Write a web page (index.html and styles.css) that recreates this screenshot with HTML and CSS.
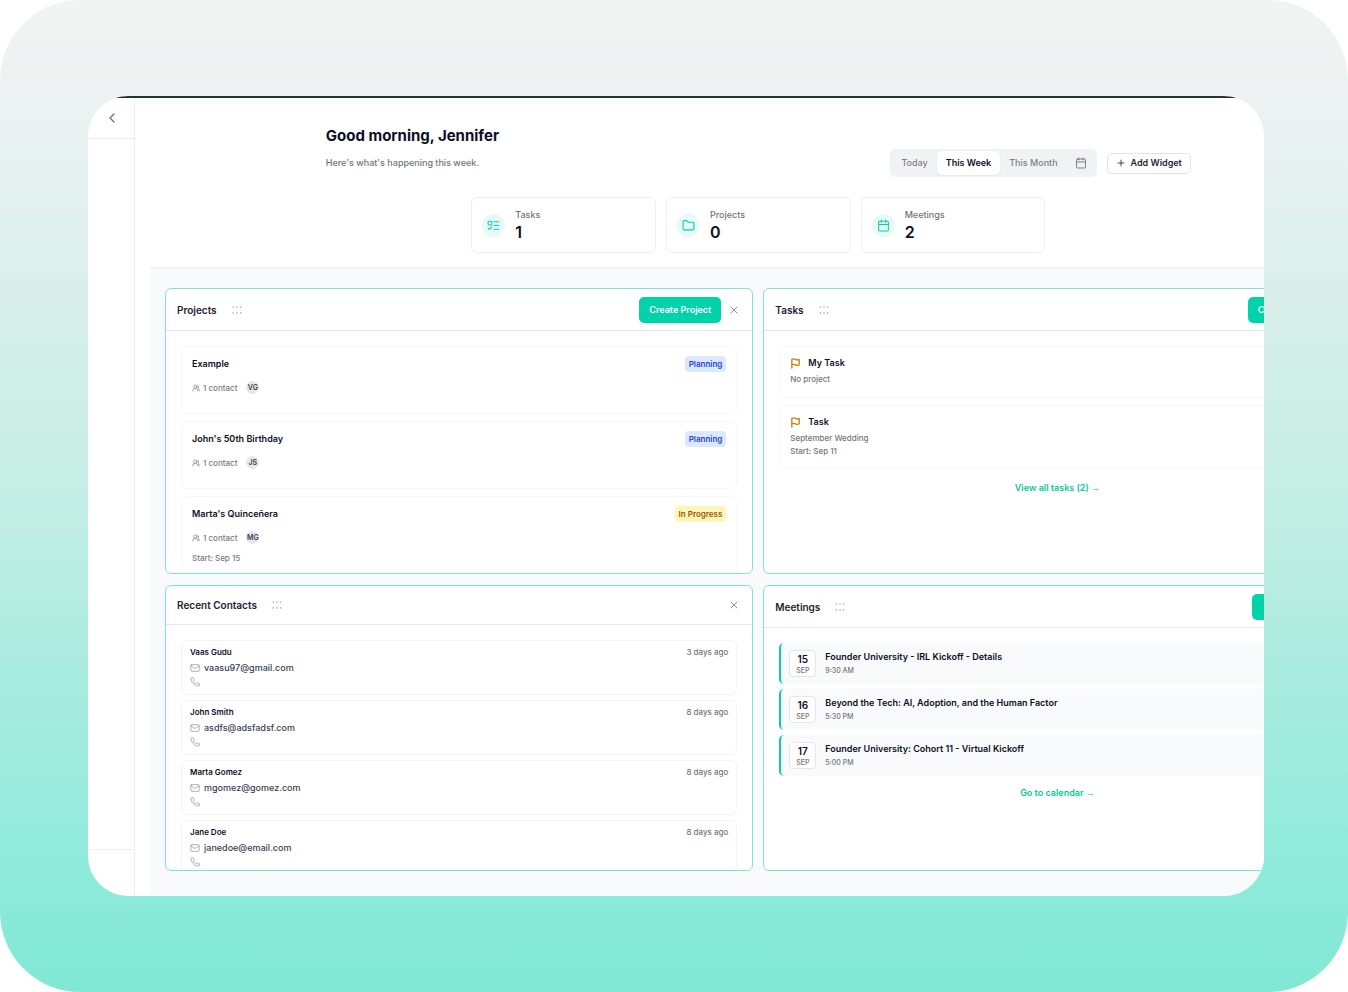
FILE: index.html
```html
<!DOCTYPE html>
<html lang="en">
<head>
<meta charset="utf-8">
<title>Dashboard</title>
<link rel="stylesheet" href="styles.css">
</head>
<body>
<svg class="sprite" aria-hidden="true">
  <symbol id="i-left" viewBox="0 0 24 24"><path d="m15 18-6-6 6-6"/></symbol>
  <symbol id="i-x" viewBox="0 0 24 24"><path d="M18 6 6 18M6 6l12 12"/></symbol>
  <symbol id="i-plus" viewBox="0 0 24 24"><path d="M5 12h14M12 5v14"/></symbol>
  <symbol id="i-cal" viewBox="0 0 24 24"><path d="M8 2v4M16 2v4M3 10h18"/><rect x="3" y="4" width="18" height="18" rx="2"/></symbol>
  <symbol id="i-folder" viewBox="0 0 24 24"><path d="M20 20a2 2 0 0 0 2-2V8a2 2 0 0 0-2-2h-7.9a2 2 0 0 1-1.69-.9L9.600 3.900A2 2 0 0 0 7.930 3H4a2 2 0 0 0-2 2v13a2 2 0 0 0 2 2Z"/></symbol>
  <symbol id="i-todo" viewBox="0 0 24 24"><rect x="2" y="4" width="7" height="7" rx="2"/><path d="m2 17 2 2 5-4M13 5h9M13 12h9M13 19h9"/></symbol>
  <symbol id="i-flag" viewBox="0 0 24 24"><path d="M4 15s1-1 4-1 5 2 8 2 4-1 4-1V3s-1 1-4 1-5-2-8-2-4 1-4 1zM4 22v-7"/></symbol>
  <symbol id="i-users" viewBox="0 0 24 24"><path d="M18 21a8 8 0 0 0-16 0"/><circle cx="10" cy="8" r="5"/><path d="M22 20c0-3.370-2-6.500-4-8a5 5 0 0 0-.45-8.300"/></symbol>
  <symbol id="i-mail" viewBox="0 0 24 24"><rect x="2" y="4" width="20" height="16" rx="2"/><path d="m22 7-8.970 5.700a1.940 1.940 0 0 1-2.060 0L2 7"/></symbol>
  <symbol id="i-phone" viewBox="0 0 24 24"><path d="M22 16.920v3a2 2 0 0 1-2.180 2 19.790 19.790 0 0 1-8.630-3.070 19.500 19.500 0 0 1-6-6 19.790 19.790 0 0 1-3.070-8.670A2 2 0 0 1 4.110 2h3a2 2 0 0 1 2 1.720 12.840 12.840 0 0 0 .7 2.810 2 2 0 0 1-.45 2.110L8.090 9.910a16 16 0 0 0 6 6l1.270-1.270a2 2 0 0 1 2.110-.45 12.840 12.840 0 0 0 2.810.7A2 2 0 0 1 22 16.920z"/></symbol>
  <symbol id="i-grip" viewBox="0 0 24 24"><path d="M3 5h.01M12 5h.01M21 5h.01M3 19h.01M12 19h.01M21 19h.01"/></symbol>
</svg>
<div class="stage">
  <div class="screen">
    <div class="app">
      <nav class="sidebar" aria-label="Sidebar">
        <div class="sidebar-top"><button class="icon-btn" aria-label="Collapse sidebar"><svg class="icon icon-lg"><use href="#i-left"/></svg></button></div>
        <div class="sidebar-foot"></div>
      </nav>
      <main class="main">
        <header class="header">
          <div class="intro">
            <div class="greeting">
              <h1>Good morning, Jennifer</h1>
              <p>Here's what's happening this week.</p>
            </div>
            <div class="controls">
              <div class="range">
                <button class="tab">Today</button>
                <button class="tab tab-active">This Week</button>
                <button class="tab">This Month</button>
                <button class="tab tab-icon" aria-label="Pick dates"><svg class="icon icon-md"><use href="#i-cal"/></svg></button>
              </div>
              <button class="add"><svg class="icon icon-sm"><use href="#i-plus"/></svg>Add Widget</button>
            </div>
          </div>
          <div class="stats">
            <div class="stat"><span class="stat-icon"><svg class="icon icon-stat"><use href="#i-todo"/></svg></span><div><p class="stat-label">Tasks</p><p class="stat-value">1</p></div></div>
            <div class="stat"><span class="stat-icon"><svg class="icon icon-stat"><use href="#i-folder"/></svg></span><div><p class="stat-label">Projects</p><p class="stat-value">0</p></div></div>
            <div class="stat"><span class="stat-icon"><svg class="icon icon-stat"><use href="#i-cal"/></svg></span><div><p class="stat-label">Meetings</p><p class="stat-value">2</p></div></div>
          </div>
        </header>
        <div class="board">
          <section class="widget">
            <div class="widget-head"><h2>Projects</h2><svg class="icon grip"><use href="#i-grip"/></svg><button class="primary">Create Project</button><button class="icon-btn close" aria-label="Remove Projects"><svg class="icon icon-md"><use href="#i-x"/></svg></button></div>
            <div class="widget-body projects">
              <article class="card project"><div class="row"><h3>Example</h3><span class="badge planning">Planning</span></div><div class="people"><svg class="icon icon-xs"><use href="#i-users"/></svg>1 contact<span class="avatar">VG</span></div></article>
              <article class="card project"><div class="row"><h3>John's 50th Birthday</h3><span class="badge planning">Planning</span></div><div class="people"><svg class="icon icon-xs"><use href="#i-users"/></svg>1 contact<span class="avatar">JS</span></div></article>
              <article class="card project"><div class="row"><h3>Marta's Quinceñera</h3><span class="badge progress">In Progress</span></div><div class="people"><svg class="icon icon-xs"><use href="#i-users"/></svg>1 contact<span class="avatar">MG</span></div><p class="start">Start: Sep 15</p></article>
            </div>
          </section>
          <section class="widget">
            <div class="widget-head"><h2>Tasks</h2><svg class="icon grip"><use href="#i-grip"/></svg><button class="primary">Create Task</button><button class="icon-btn close" aria-label="Remove Tasks"><svg class="icon icon-md"><use href="#i-x"/></svg></button></div>
            <div class="widget-body tasks">
              <article class="card task"><h3><svg class="icon flag"><use href="#i-flag"/></svg>My Task</h3><p>No project</p></article>
              <article class="card task"><h3><svg class="icon flag"><use href="#i-flag"/></svg>Task</h3><p>September Wedding</p><p>Start: Sep 11</p></article>
              <a class="more" href="#tasks">View all tasks (2) <span class="arrow">→</span></a>
            </div>
          </section>
          <section class="widget">
            <div class="widget-head compact"><h2>Recent Contacts</h2><svg class="icon grip"><use href="#i-grip"/></svg><button class="icon-btn close" aria-label="Remove Recent Contacts"><svg class="icon icon-md"><use href="#i-x"/></svg></button></div>
            <div class="widget-body contacts">
              <article class="card contact"><div class="row"><h3>Vaas Gudu</h3><span>3 days ago</span></div><p class="line"><svg class="icon icon-sm"><use href="#i-mail"/></svg>vaasu97@gmail.com</p><p class="line phone"><svg class="icon icon-sm"><use href="#i-phone"/></svg></p></article>
              <article class="card contact"><div class="row"><h3>John Smith</h3><span>8 days ago</span></div><p class="line"><svg class="icon icon-sm"><use href="#i-mail"/></svg>asdfs@adsfadsf.com</p><p class="line phone"><svg class="icon icon-sm"><use href="#i-phone"/></svg></p></article>
              <article class="card contact"><div class="row"><h3>Marta Gomez</h3><span>8 days ago</span></div><p class="line"><svg class="icon icon-sm"><use href="#i-mail"/></svg>mgomez@gomez.com</p><p class="line phone"><svg class="icon icon-sm"><use href="#i-phone"/></svg></p></article>
              <article class="card contact"><div class="row"><h3>Jane Doe</h3><span>8 days ago</span></div><p class="line"><svg class="icon icon-sm"><use href="#i-mail"/></svg>janedoe@email.com</p><p class="line phone"><svg class="icon icon-sm"><use href="#i-phone"/></svg></p></article>
            </div>
          </section>
          <section class="widget">
            <div class="widget-head"><h2>Meetings</h2><svg class="icon grip"><use href="#i-grip"/></svg><button class="primary">Schedule</button><button class="icon-btn close" aria-label="Remove Meetings"><svg class="icon icon-md"><use href="#i-x"/></svg></button></div>
            <div class="widget-body meetings">
              <article class="meeting"><div class="date"><b>15</b><span>SEP</span></div><div><h3>Founder University - IRL Kickoff - Details</h3><p>9:30 AM</p></div></article>
              <article class="meeting"><div class="date"><b>16</b><span>SEP</span></div><div><h3>Beyond the Tech: AI, Adoption, and the Human Factor</h3><p>5:30 PM</p></div></article>
              <article class="meeting"><div class="date"><b>17</b><span>SEP</span></div><div><h3>Founder University: Cohort 11 - Virtual Kickoff</h3><p>5:00 PM</p></div></article>
              <a class="more" href="#calendar">Go to calendar <span class="arrow">→</span></a>
            </div>
          </section>
        </div>
      </main>
    </div>
  </div>
</div>
</body>
</html>
```
FILE: styles.css
```css
* { box-sizing: border-box; }
body, h1, h2, h3, p { margin: 0; }
body { background: #fff; color: #0b0f1f; font: 500 8px/12px Inter, "Open Sans", sans-serif; }
button { font: inherit; color: inherit; border: 0; background: none; padding: 0; }
.sprite { display: none; }

.stage { min-height: 100vh; padding: 96px 84px 96px 88px; border-radius: 80px; background: linear-gradient(180deg, #f3f3f3 0%, #ecf2f1 10%, #d9efeb 30%, #c0ede3 53%, #a3ebde 72%, #8eeada 88%, #81e8d6 100%); }
.screen { overflow: hidden; border-radius: 40px; background: #fff; }
.app { display: flex; width: 110%; border-top: 2px solid #243624; }

.icon { flex: none; width: 12px; height: 12px; fill: none; stroke: currentColor; stroke-width: 2; stroke-linecap: round; stroke-linejoin: round; }
.icon-xs { width: 8px; height: 8px; }
.icon-sm { width: 10px; height: 10px; }
.icon-md { width: 12px; height: 12px; }
.icon-lg { width: 16px; height: 16px; }
.icon-stat { width: 13px; height: 13px; }
.icon-btn { display: flex; color: #6b7280; }

.sidebar { display: flex; flex-direction: column; justify-content: space-between; flex: none; width: 47px; border-right: 1px solid #eceef0; }
.sidebar-top { display: flex; padding: 12px 16px; border-bottom: 1px solid #eceef0; }
.sidebar-foot { height: 47px; border-top: 1px solid #eceef0; }

.main { flex: 1; padding: 0 15px; }
.header { padding: 27px 15px 14px; border-bottom: 2px solid #f0f2f4; }
.intro { display: flex; justify-content: space-between; align-items: flex-end; max-width: 865px; margin: 0 auto; }
.greeting { padding-bottom: 8px; }
h1 { font-size: 15px; line-height: 22px; font-weight: 700; }
.greeting p { margin-top: 10px; font-size: 9px; color: #71757c; }
.controls { display: flex; align-items: center; gap: 10px; font-size: 9px; font-weight: 600; }
.range { display: flex; padding: 2px; border-radius: 5px; background: #f1f2f4; }
.tab { display: flex; align-items: center; height: 24px; padding: 0 9px; border-radius: 5px; color: #7c8087; font-weight: 500; }
.tab-active { background: #fff; color: #0b0f1f; font-weight: 600; box-shadow: 0 1px 2px #0000000d; }
.tab-icon { padding: 0 8px; }
.add { display: flex; align-items: center; gap: 5px; height: 21px; padding: 0 8px; border: 1px solid #e2e4e8; border-radius: 5px; color: #1d2536; }

.stats { display: grid; grid-template-columns: repeat(3, 1fr); gap: 10px; max-width: 574px; margin: 20px auto 0; }
.stat { display: flex; align-items: center; gap: 10px; height: 56px; padding: 0 10px; border: 1px solid #eeeff1; border-radius: 6px; }
.stat-icon { display: grid; place-items: center; width: 23px; height: 23px; border-radius: 50%; background: #e8faf6; color: #06cfa5; }
.stat-label { font-size: 9px; line-height: 12px; color: #71757c; }
.stat-value { padding-top: 2px; font-size: 16px; line-height: 18px; font-weight: 600; }

.board { display: grid; grid-template-columns: 1fr 1fr; grid-auto-rows: 286px; gap: 11px 10px; padding: 19px 15px 25px; background: #f9fafc; }
.widget { overflow: hidden; border: 1px solid #84e3c9; border-radius: 6px; background: #fff; }
.widget-head { display: flex; align-items: center; height: 42px; padding: 0 12px 0 11px; border-bottom: 1px solid #e5e7e9; }
.compact { height: 39px; }
h2 { font-size: 10px; line-height: 14px; font-weight: 600; color: #1d2230; }
.grip { width: 10px; height: 10px; margin-left: 15px; color: #70757d; stroke-width: 3; }
.primary { min-width: 68px; height: 26px; margin-left: auto; padding: 0 10px; border-radius: 5px; background: #00d3a9; color: #fff; font-size: 9px; font-weight: 600; }
.close { margin-left: 7px; color: #8b9099; }
.compact .close { margin-left: auto; }
.widget-body { display: flex; flex-direction: column; padding: 15px; }
h3 { font-size: 9px; line-height: 12px; font-weight: 600; }
.card { flex: none; border: 1px solid #f8f8f9; border-radius: 6px; }
.row { display: flex; align-items: center; justify-content: space-between; }

.projects { gap: 7px; }
.project { min-height: 68px; padding: 9px 10px; color: #777b82; }
.project h3 { color: #0b0f1f; }
.badge { padding: 2px 4px; border-radius: 4px; font-weight: 600; line-height: 12px; }
.planning { background: #dbe8fe; color: #1d45d8; }
.progress { background: #fef6b8; color: #9a5608; }
.people { display: flex; align-items: center; gap: 3px; margin-top: 9px; }
.avatar { display: grid; place-items: center; width: 13px; height: 13px; margin-left: 6px; border-radius: 50%; background: #e5e7eb; color: #374151; font-size: 7px; font-weight: 600; }
.start { margin-top: 8px; padding-bottom: 8px; }

.tasks { gap: 7px; }
.task { min-height: 52px; padding: 10px 10px 9px; color: #71757c; line-height: 13px; }
.task h3 { display: flex; align-items: center; gap: 7px; margin-bottom: 4px; color: #0b0f1f; }
.flag { width: 11px; height: 11px; color: #c98012; stroke-width: 3; }
.more { align-self: center; margin-top: 7px; color: #05c99b; font-size: 9px; font-weight: 600; line-height: 12px; text-decoration: none; }
.arrow { font-family: "Liberation Sans", sans-serif; font-weight: 400; }

.contacts { gap: 5px; }
.contact { min-height: 55px; padding: 5px 8px; border-color: #f3f4f5; }
.contact h3 { font-size: 8px; }
.contact .row span { color: #71757c; }
.line { display: flex; align-items: center; gap: 4px; margin-top: 4px; color: #374151; font-size: 9px; }
.phone { margin-top: 3px; }
.line .icon { color: #9ca3af; }

.meetings { gap: 5px; }
.meeting { display: flex; align-items: center; gap: 9px; height: 41px; padding: 0 8px; border-left: 2px solid #10cc9c; border-radius: 5px; background: #f9fafc; }
.meeting p { margin-top: 2px; font-size: 7px; color: #71757c; }
.date { display: grid; justify-items: center; align-content: center; width: 27px; height: 27px; padding-top: 2px; border: 1px solid #e4e6ea; border-radius: 4px; background: #fff; }
.date b { font-size: 10px; line-height: 13px; font-weight: 600; }
.date span { font-size: 7px; line-height: 10px; color: #71757c; }
.meetings .more { margin-top: 6px; }
```
